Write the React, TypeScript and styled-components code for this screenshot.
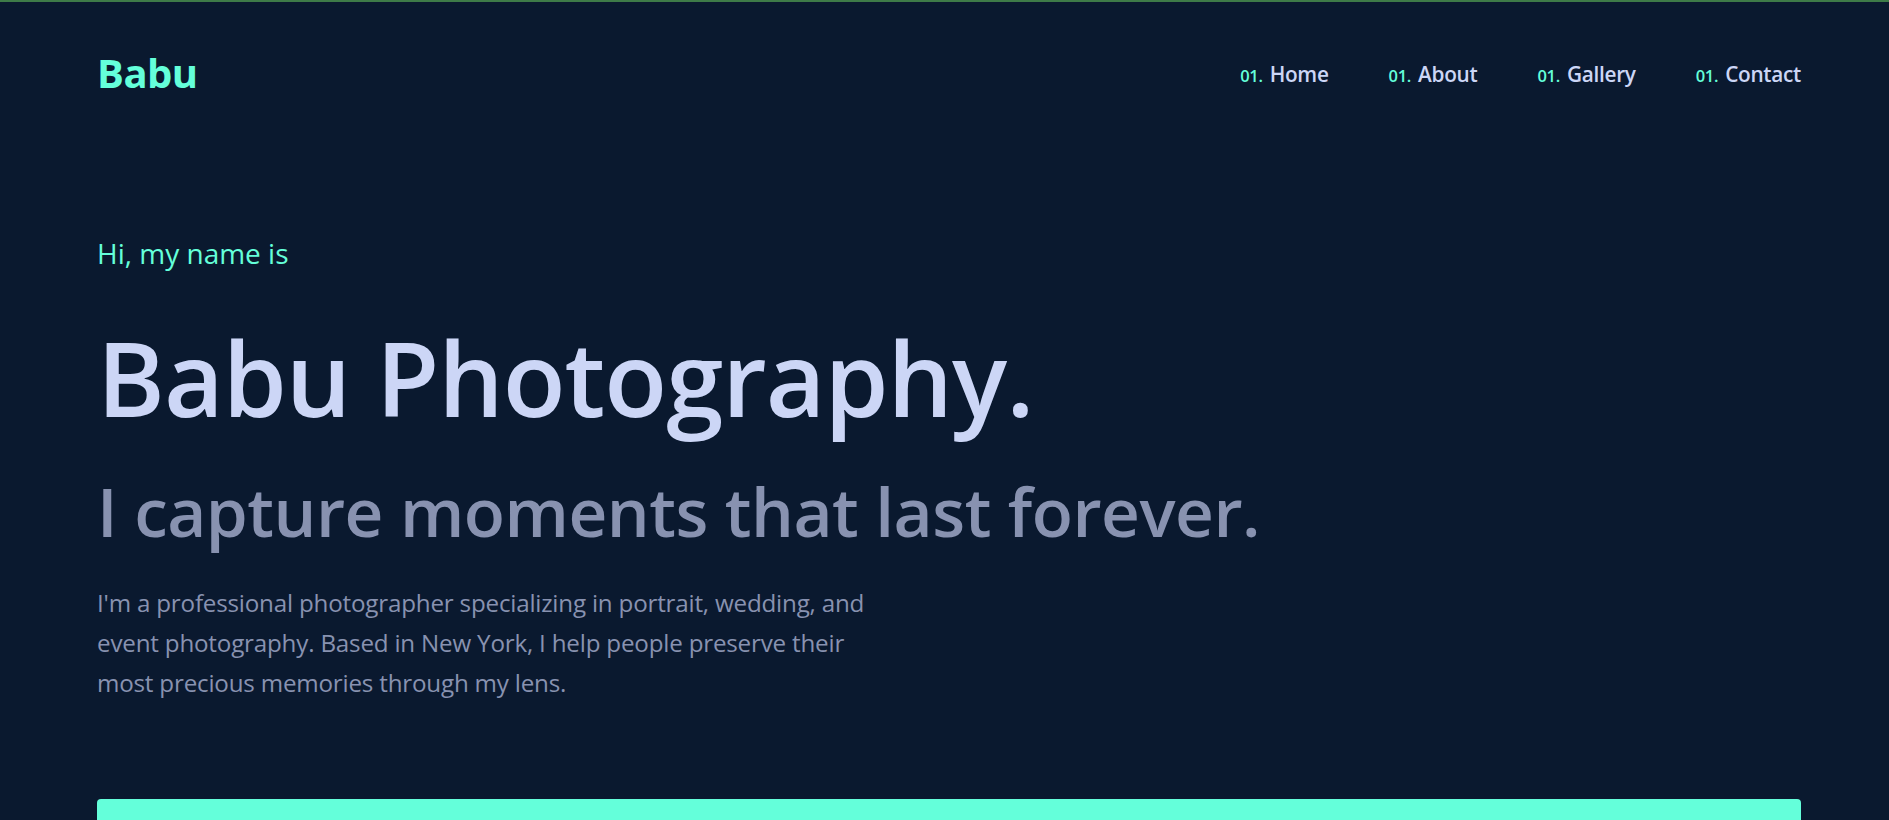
import React from "react";
import styled, { createGlobalStyle } from "styled-components";

const GlobalStyle = createGlobalStyle`
  html, body {
    margin: 0;
    padding: 0;
    background: #0a192f;
    overflow: hidden;
  }
  * { box-sizing: border-box; }
  body {
    font-family: "Open Sans", "Noto Sans", sans-serif;
    border-top: 2px solid #3e7b48;
  }
`;

const Page = styled.div`
  display: flex;
  flex-direction: column;
  padding: 0 88px 0 97px;
`;

const Header = styled.header`
  display: flex;
  justify-content: space-between;
  align-items: center;
  height: 144px;
  flex-shrink: 0;
`;

const Logo = styled.a`
  color: #64ffda;
  font-size: 40px;
  font-weight: 700;
  text-decoration: none;
  letter-spacing: -0.5px;
  margin-top: -3px;
`;

const Nav = styled.nav`
  display: flex;
  gap: 60px;
  align-items: baseline;
`;

const NavLink = styled.a`
  color: #ccd6f6;
  font-size: 20.8px;
  font-weight: 600;
  text-decoration: none;
  display: flex;
  align-items: baseline;
  gap: 7px;
  letter-spacing: -0.3px;
`;

const NavNum = styled.span`
  color: #64ffda;
  font-size: 16.5px;
`;

const Hero = styled.section`
  display: flex;
  flex-direction: column;
  flex-shrink: 0;
  padding-top: 88px;
`;

const Greeting = styled.p`
  margin: 0;
  color: #64ffda;
  font-size: 28px;
  line-height: 38px;
`;

const Title = styled.h1`
  margin: 45px 0 0;
  color: #ccd6f6;
  font-size: 103px;
  font-weight: 600;
  line-height: 120px;
  letter-spacing: -1px;
`;

const Subtitle = styled.h2`
  margin: 29px 0 0;
  color: #8892b0;
  font-size: 67.5px;
  font-weight: 600;
  line-height: 90px;
  letter-spacing: -0.5px;
`;

const Bio = styled.p`
  margin: 27px 0 0;
  max-width: 790px;
  color: #8892b0;
  font-size: 24.2px;
  line-height: 40px;
  letter-spacing: -0.2px;
`;

const CtaButton = styled.button`
  margin-top: 96px;
  width: 100%;
  height: 110px;
  flex-shrink: 0;
  border: none;
  border-radius: 4px;
  background: #64ffda;
  color: #0a192f;
  font-family: inherit;
  font-size: 18px;
  font-weight: 600;
  cursor: pointer;
`;

const links = ["Home", "About", "Gallery", "Contact"];

export default function App() {
  return (
    <>
      <GlobalStyle />
      <Page>
        <Header>
          <Logo href="#">Babu</Logo>
          <Nav>
            {links.map((l) => (
              <NavLink key={l} href="#">
                <NavNum>01.</NavNum>
                {l}
              </NavLink>
            ))}
          </Nav>
        </Header>
        <Hero>
          <Greeting>Hi, my name is</Greeting>
          <Title>Babu Photography.</Title>
          <Subtitle>I capture moments that last forever.</Subtitle>
          <Bio>
            I'm a professional photographer specializing in portrait, wedding,
            and event photography. Based in New York, I help people preserve
            their most precious memories through my lens.
          </Bio>
          <CtaButton>View My Work</CtaButton>
        </Hero>
      </Page>
    </>
  );
}
